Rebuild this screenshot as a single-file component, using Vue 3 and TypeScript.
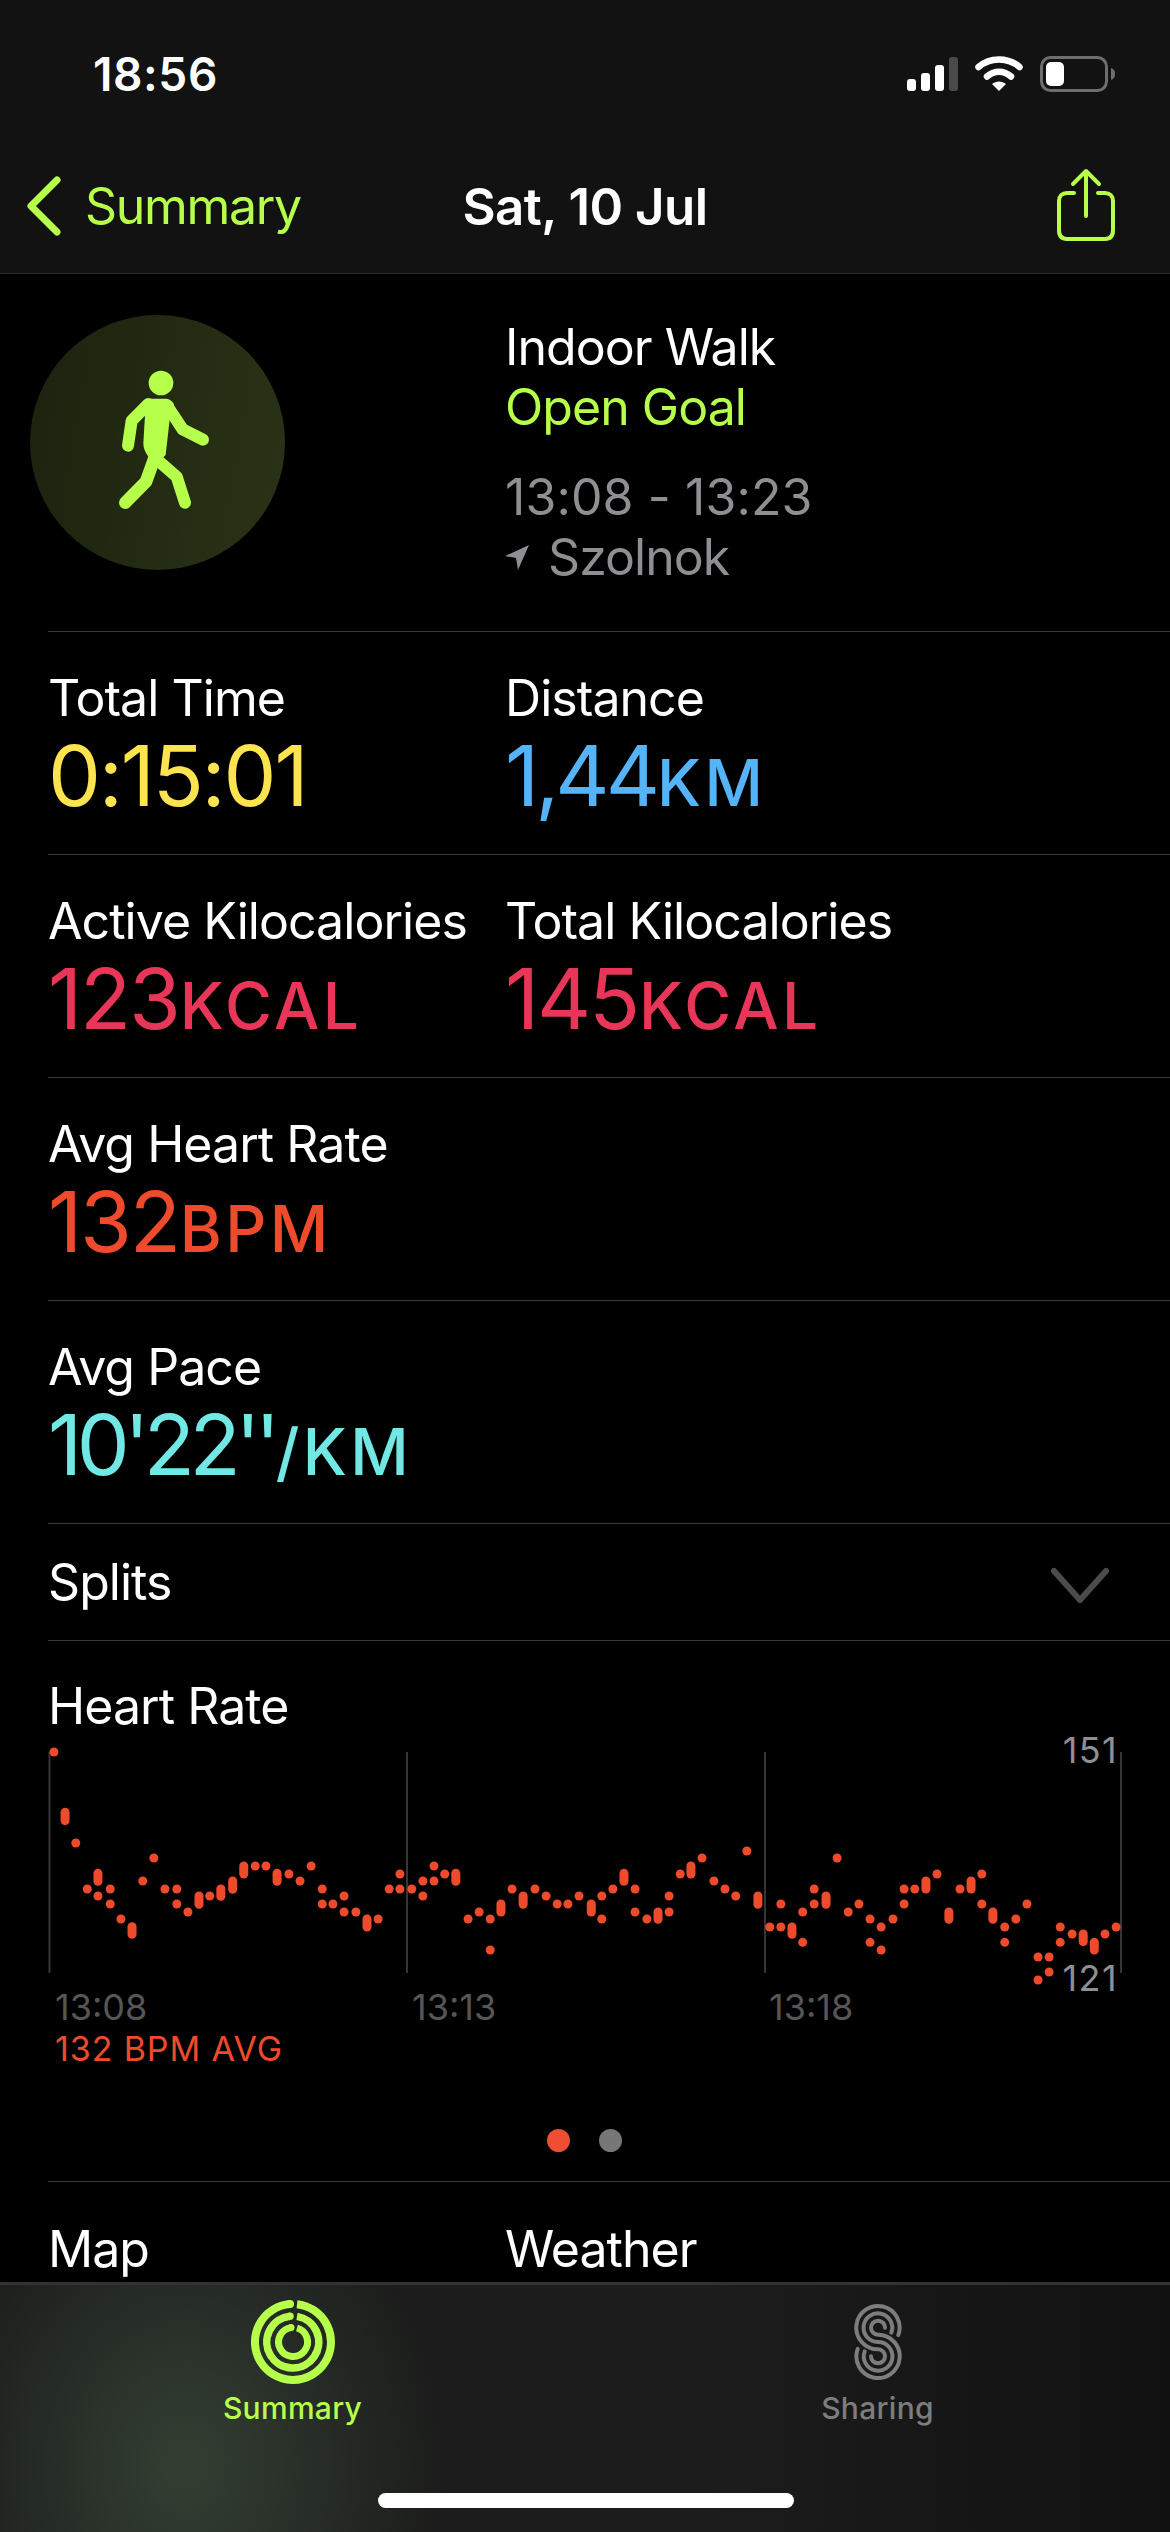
<template>
  <div class="phone">
    <header class="top">
      <div class="status">
        <span class="clock">18:56</span>
        <div class="status-icons">
          <svg width="51" height="34" viewBox="0 0 51 34">
            <rect x="0" y="22" width="9" height="12" rx="3" fill="#fff" />
            <rect x="14" y="16" width="9" height="18" rx="3" fill="#fff" />
            <rect x="28" y="8" width="9" height="26" rx="3" fill="#fff" />
            <rect x="42" y="0" width="9" height="34" rx="3" fill="#4a4a4a" />
          </svg>
          <svg width="48" height="36" viewBox="0 0 48 36">
            <path d="M3.5 11C15 1 33 1 44.5 11" fill="none" stroke="#fff" stroke-width="6.5" stroke-linecap="round" />
            <path d="M12 20.5C19 14 29 14 36 20.5" fill="none" stroke="#fff" stroke-width="6.5" stroke-linecap="round" />
            <path d="M17 28C21 24.5 27 24.5 31 28L24 35Z" fill="#fff" />
          </svg>
          <svg width="75" height="36" viewBox="0 0 75 36">
            <rect x="1.5" y="1.5" width="65" height="33" rx="9" fill="none" stroke="#6e6e6e" stroke-width="3" />
            <rect x="6" y="6" width="18" height="24" rx="5" fill="#fff" />
            <path d="M71 12C74 13 75 15 75 18S74 23 71 24Z" fill="#6e6e6e" />
          </svg>
        </div>
      </div>
      <nav class="nav">
        <div class="back">
          <svg width="38" height="60" viewBox="0 0 38 60">
            <path d="M31 4L5 30L31 56" fill="none" stroke="currentColor" stroke-width="7" stroke-linecap="round" stroke-linejoin="round" />
          </svg>
          <span>Summary</span>
        </div>
        <div class="nav-title">Sat, 10 Jul</div>
        <svg class="share" width="60" height="74" viewBox="0 0 60 74">
          <path d="M18 25H11C6 25 3 28 3 33V62C3 68 6 71 11 71H49C54 71 57 68 57 62V33C57 28 54 25 49 25H42" fill="none" stroke="currentColor" stroke-width="4" stroke-linecap="round" />
          <path d="M30 48V3M17 16L30 3L43 16" fill="none" stroke="currentColor" stroke-width="4" stroke-linecap="round" stroke-linejoin="round" />
        </svg>
      </nav>
    </header>

    <main class="content">
      <section class="hero">
        <div class="left-col">
          <div class="badge">
            <svg width="255" height="255" viewBox="30 45 765 765">
              <circle cx="423" cy="249" r="37" fill="#b6ff4a" />
              <path d="M378 296H436Q452 296 462 312L450 350L437 465L415 485L385 470Q370 450 370 430Z" fill="#b6ff4a" />
              <g fill="none" stroke="#b6ff4a" stroke-linecap="round" stroke-linejoin="round">
                <path d="M385 312L335 362L324 437" stroke-width="36" />
                <path d="M442 318L488 388L549 419" stroke-width="36" />
                <path d="M405 470L378 545L316 608" stroke-width="38" />
                <path d="M415 482L470 530L495 608" stroke-width="36" />
              </g>
            </svg>
          </div>
        </div>
        <div class="hero-text">
          <div class="label">Indoor Walk</div>
          <div class="label green">Open Goal</div>
          <div class="label grey gap">13:08 - 13:23</div>
          <div class="label grey place">
            <svg width="24" height="28" viewBox="0 0 24 28"><path d="M24 2L13 27L11 15L0 13Z" fill="#8e8e93" /></svg>
            <span>Szolnok</span>
          </div>
        </div>
      </section>

      <section v-for="(row, i) in stats" :key="i" class="row stat-row">
        <div v-for="s in row" :key="s.label" class="stat">
          <div class="label">{{ s.label }}</div>
          <div class="value" :style="{ color: s.color }">
            <span :class="s.fit">{{ s.value }}</span><span class="unit">{{ s.unit }}</span>
          </div>
        </div>
      </section>

      <section class="row splits">
        <span class="label">Splits</span>
        <svg width="60" height="38" viewBox="0 0 60 38">
          <path d="M4 4L30 33L56 4" fill="none" stroke="#4b4b4e" stroke-width="6" stroke-linecap="round" stroke-linejoin="round" />
        </svg>
      </section>

      <section class="row chart-section">
        <div class="label">Heart Rate</div>
        <svg class="chart" width="1122" height="282" viewBox="0 1720 1122 282">
          <line v-for="x in [49.5, 407, 765, 1121]" :key="x" :x1="x" :x2="x" y1="1752" y2="1973" stroke="#363636" stroke-width="2" />
          <line v-for="(d, i) in dots" :key="i" :x1="d.x" :x2="d.x" :y1="d.y1" :y2="d.y2" stroke="#ee4a2c" stroke-width="9" stroke-linecap="round" />
          <text x="1118" y="1763" class="axis-val" text-anchor="end">151</text>
          <text x="1118" y="1991" class="axis-val" text-anchor="end">121</text>
        </svg>
        <div class="times">
          <span v-for="t in ['13:08', '13:13', '13:18']" :key="t">{{ t }}</span>
        </div>
        <div class="avg">132 BPM AVG</div>
        <div class="pager">
          <i class="on"></i>
          <i></i>
        </div>
      </section>

      <section class="row last-row">
        <div class="label">Map</div>
        <div class="label">Weather</div>
      </section>
    </main>

    <footer class="tabs">
      <div class="tab active">
        <svg width="86" height="86" viewBox="0 0 86 86">
          <g fill="none" stroke="#b6ff4a">
            <path d="M47 5.2A38 38 0 1 1 40 5.1" stroke-width="8" />
            <path d="M40 5.1L40 5.1" stroke-width="8" stroke-linecap="round" />
            <path d="M47 17.4A26 26 0 1 1 40 17.2" stroke-width="7.5" />
            <path d="M40 17.2L40 17.2" stroke-width="7.5" stroke-linecap="round" />
            <path d="M47 29A14.5 14.5 0 1 1 41 28.6" stroke-width="7" />
            <path d="M41 28.6L41 28.6" stroke-width="7" stroke-linecap="round" />
          </g>
        </svg>
        <span>Summary</span>
      </div>
      <div class="tab">
        <svg width="50" height="80" viewBox="155 60 150 240">
          <g fill="none" stroke="#7d7d7d" stroke-width="12" stroke-linecap="round">
            <path d="M291 159A65 65 0 1 0 230 202A21 21 0 1 1 209 223" />
            <path d="M270 152A43 43 0 1 0 230 180A43 43 0 1 1 190 208" />
            <path d="M251 137A21 21 0 1 0 230 158A65 65 0 1 1 169 201" />
          </g>
        </svg>
        <span>Sharing</span>
      </div>
      <div class="home-bar"></div>
    </footer>
  </div>
</template>

<script setup lang="ts">
interface Stat {
  label: string
  value: string
  unit: string
  color: string
  fit?: 'snug' | 'tight'
}

const stats: Stat[][] = [
  [
    { label: 'Total Time', value: '0:15:01', unit: '', color: '#fce350' },
    { label: 'Distance', value: '1,44', unit: 'KM', color: '#55b4f8', fit: 'snug' }
  ],
  [
    { label: 'Active Kilocalories', value: '123', unit: 'KCAL', color: '#e83658' },
    { label: 'Total Kilocalories', value: '145', unit: 'KCAL', color: '#e83658' }
  ],
  [{ label: 'Avg Heart Rate', value: '132', unit: 'BPM', color: '#ee4a2c' }],
  [{ label: 'Avg Pace', value: "10'22''", unit: '/KM', color: '#72e8e4', fit: 'tight' }]
]

// [x, yTop, yBottom] read off the reference crops
const leftSamples: number[][] = [
  [141, 216], [170, 397, 422], [198, 489], [228, 627], [256, 580, 604], [256, 648], [288, 627], [288, 672],
  [316, 717], [345, 740, 763], [373, 603], [402, 534], [431, 627], [462, 627], [462, 672], [491, 696],
  [520, 648, 673], [548, 648], [577, 627, 649], [608, 603, 628], [637, 558, 582], [667, 558], [695, 558],
  [724, 580, 604], [755, 582], [784, 603], [813, 558], [842, 627], [842, 672], [870, 672], [899, 648],
  [899, 696], [930, 696], [959, 717, 741], [988, 717], [1017, 627], [1045, 582], [1045, 627], [1076, 627],
  [1105, 603], [1105, 648], [1134, 558], [1134, 603], [1162, 582], [1191, 580, 604], [1223, 717], [1252, 696],
  [1281, 717], [1281, 810], [1309, 672, 696], [1338, 627], [1367, 648, 673], [1398, 627], [1427, 648],
  [1456, 672], [1484, 672], [1513, 648], [1545, 672, 696]
]
const rightSamples: number[][] = [
  [83, 648], [83, 717], [112, 627], [141, 580, 604], [170, 627], [170, 696], [201, 717], [230, 696, 718],
  [259, 648], [259, 696], [288, 582], [316, 558, 582], [345, 534], [376, 603], [405, 627], [433, 648],
  [462, 513], [491, 648, 673], [522, 741], [551, 672], [551, 741], [580, 741, 763], [608, 696], [608, 787],
  [638, 627], [638, 672], [669, 648, 673], [698, 534], [727, 696], [755, 672], [784, 717], [784, 787],
  [813, 741], [813, 810], [844, 717], [873, 627], [873, 672], [901, 627], [930, 603, 627], [959, 582],
  [990, 696, 718], [1019, 627], [1048, 603, 627], [1076, 582], [1076, 672], [1105, 696, 718], [1136, 741],
  [1136, 787], [1165, 717], [1194, 672], [1223, 831], [1223, 900], [1252, 831], [1252, 876], [1281, 741],
  [1281, 787], [1312, 762], [1341, 762, 785], [1370, 787, 810], [1398, 762], [1427, 741]
]

const toDot = (s: number[], originX: number) => ({
  x: originX + s[0] / 2.613,
  y1: 1680 + s[1] / 3,
  y2: 1680 + (s[2] ?? s[1]) / 3
})

const dots = [...leftSamples.map((s) => toDot(s, 0)), ...rightSamples.map((s) => toDot(s, 570))]
</script>

<style scoped>
.phone {
  position: relative;
  width: 1170px;
  height: 2532px;
  overflow: hidden;
  background: #000;
  color: #fff;
  font-family: Inter, "Liberation Sans", sans-serif;
}
.top {
  height: 274px;
  background: #121212;
  border-bottom: 1px solid #2a2a2a;
  box-sizing: border-box;
}
.status {
  height: 167px;
  display: flex;
  justify-content: space-between;
  align-items: flex-start;
  padding: 50px 55px 0 93px;
  box-sizing: border-box;
}
.clock {
  font-size: 46px;
  line-height: 48px;
  font-weight: 600;
  letter-spacing: 0.6px;
}
.status-icons {
  display: flex;
  align-items: center;
  gap: 17px;
  margin-top: 6px;
}
.nav {
  position: relative;
  display: flex;
  justify-content: space-between;
  align-items: center;
  height: 78px;
  padding: 0 54px 0 26px;
}
.back {
  display: flex;
  align-items: center;
  gap: 21px;
  color: #b6ff4a;
  font-size: 50px;
  letter-spacing: -1.3px;
}
.nav-title {
  position: absolute;
  left: 0;
  right: 0;
  text-align: center;
  font-size: 51px;
  font-weight: 600;
  letter-spacing: -0.5px;
}
.share {
  color: #b6ff4a;
  margin-top: -2px;
}
.row {
  margin-left: 48px;
  border-bottom: 1px solid #3a3a3a;
  box-sizing: border-box;
}
.hero {
  display: flex;
  height: 358px;
  position: relative;
}
.hero::after {
  content: "";
  position: absolute;
  left: 48px;
  right: 0;
  bottom: 0;
  border-bottom: 1px solid #3a3a3a;
}
.left-col {
  width: 505px;
  padding: 41px 0 0 30px;
  box-sizing: border-box;
}
.badge {
  width: 255px;
  height: 255px;
  border-radius: 50%;
  background: linear-gradient(100deg, #1c220e, #2a3317);
}
.hero-text {
  padding-top: 43px;
}
.label {
  font-size: 50px;
  line-height: 60px;
  letter-spacing: -0.95px;
}
.green {
  color: #b6ff4a;
}
.grey {
  color: #8e8e93;
}
.gap {
  margin-top: 30px;
  letter-spacing: 0.1px;
}
.place {
  display: flex;
  align-items: center;
  gap: 19px;
}
.stat-row {
  display: flex;
  height: 223px;
  padding-top: 36px;
}
.stat {
  width: 457px;
}
.value {
  font-size: 84px;
  line-height: 90px;
  letter-spacing: -2.2px;
  margin-top: 3px;
}
.snug {
  letter-spacing: -4px;
}
.tight {
  letter-spacing: -5.5px;
}
.unit {
  font-size: 64px;
  font-weight: 500;
  letter-spacing: 3.5px;
  margin-left: 1px;
}
.splits {
  display: flex;
  justify-content: space-between;
  align-items: center;
  height: 117px;
  padding-right: 60px;
}
.splits svg {
  margin-top: 8px;
}
.chart-section {
  height: 541px;
  padding-top: 35px;
}
.chart {
  display: block;
  margin: -16px 0 -16px -48px;
}
.axis-val {
  font-size: 36px;
  fill: #8e8e93;
  letter-spacing: 1.4px;
}
.times {
  display: flex;
  padding-left: 7px;
  color: #565656;
  font-size: 36px;
  line-height: 42px;
}
.times span {
  width: 357px;
}
.avg {
  padding-left: 7px;
  color: #ee4a2c;
  font-size: 34px;
  line-height: 42px;
  letter-spacing: 0.9px;
}
.pager {
  display: flex;
  gap: 29px;
  margin: 59px 0 0 499px;
}
.pager i {
  width: 23px;
  height: 23px;
  border-radius: 50%;
  background: #777;
}
.pager .on {
  background: #f04e33;
}
.last-row {
  display: flex;
  border-bottom: 0;
  padding-top: 37px;
}
.last-row .label {
  width: 457px;
}
.tabs {
  position: absolute;
  left: 0;
  right: 0;
  bottom: 0;
  height: 250px;
  display: flex;
  border-top: 3px solid #333;
  background: radial-gradient(ellipse 260px 320px at 185px 180px, #343f33, rgba(52, 63, 51, 0) 100%), linear-gradient(90deg, #1a1c1a, #1c1c1c 60%, #111);
  box-sizing: border-box;
  padding-top: 14px;
}
.tab {
  display: flex;
  flex-direction: column;
  align-items: center;
  color: #7d7d7d;
  font-size: 30px;
  font-weight: 500;
  line-height: 36px;
  letter-spacing: 0.3px;
  width: 585px;
}
.tab svg {
  height: 86px;
  margin-bottom: 2px;
}
.tab span {
  margin-top: 3px;
}
.tab.active {
  color: #b6ff4a;
}
.home-bar {
  position: absolute;
  left: 378px;
  bottom: 24px;
  width: 416px;
  height: 15px;
  border-radius: 8px;
  background: #fff;
}
</style>
